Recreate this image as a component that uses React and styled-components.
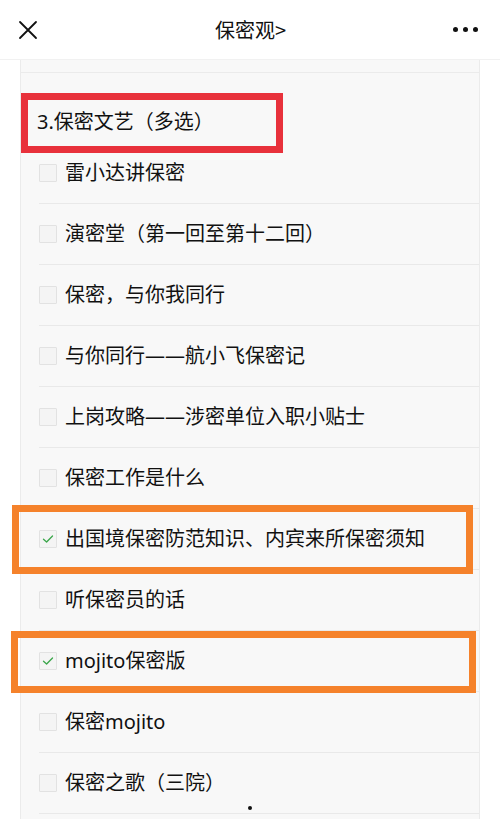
import React from "react";
import styled, { createGlobalStyle } from "styled-components";

const Global = createGlobalStyle`
  html, body { margin: 0; padding: 0; background: #ffffff; }
  body {
    font-family: "Noto Sans", "Noto Sans CJK SC", sans-serif;
    color: #111;
  }
  * { box-sizing: border-box; }
`;

const Page = styled.div`
  width: 500px;
  height: 819px;
  overflow: hidden;
  background: #ffffff;
`;

const Header = styled.header`
  height: 60px;
  display: flex;
  align-items: center;
  justify-content: space-between;
  padding: 0 22px 0 16px;
  background: #ffffff;
  border-bottom: 1px solid #f1f1f1;
`;

const HeaderTitle = styled.div`
  font-family: "Noto Sans CJK SC", sans-serif;
  font-size: 20px;
  color: #111;
  margin-left: 8px;
`;

const IconButton = styled.div`
  width: 24px;
  height: 24px;
  display: flex;
  align-items: center;
  justify-content: center;
`;

const Dots = styled.div`
  display: flex;
  gap: 5px;
  align-items: center;
`;

const Dot = styled.span`
  width: 5px;
  height: 5px;
  border-radius: 50%;
  background: #111;
`;

const Card = styled.div`
  margin-left: 20px;
  width: 460px;
  background: #f8f8f8;
  border-left: 1px solid #ebebeb;
  border-right: 1px solid #ebebeb;
  min-height: 760px;
`;

const PrevStub = styled.div`
  height: 13px;
  border-bottom: 1px solid #ebebeb;
`;

const Question = styled.section`
  padding-top: 35px;
`;

const TitleWrap = styled.div`
  position: relative;
  padding-left: 16px;
  margin-bottom: 7px;
`;

const Title = styled.h3`
  margin: 0;
  font-family: "Noto Sans", "Noto Sans CJK SC", sans-serif;
  font-weight: 400;
  font-size: 20px;
  line-height: 28px;
  color: #111;
`;

const Mark = styled.div`
  position: absolute;
  left: ${(p) => p.$left}px;
  top: ${(p) => p.$top}px;
  width: ${(p) => p.$w}px;
  height: ${(p) => p.$h}px;
  border: 7px solid ${(p) => p.$color};
  pointer-events: none;
`;

const List = styled.ul`
  list-style: none;
  margin: 0;
  padding: 0;
`;

const Row = styled.li`
  position: relative;
  margin-left: 18px;
  height: 61px;
  display: flex;
  align-items: center;
  gap: 8px;
  border-bottom: 1px solid #e9e9e9;
`;

const Box = styled.span`
  width: 18px;
  height: 18px;
  flex: none;
  border: 1px solid #e2e2e2;
  background: #f4f4f4;
  border-radius: 1px;
  display: flex;
  align-items: center;
  justify-content: center;
`;

const Label = styled.span`
  font-size: 20px;
  line-height: 28px;
  color: #111;
  white-space: nowrap;
`;

const Cursor = styled.span`
  position: absolute;
  left: 209px;
  bottom: 3px;
  width: 4px;
  height: 4px;
  border-radius: 50%;
  background: #111;
`;

const items = [
  { text: "雷小达讲保密" },
  { text: "演密堂（第一回至第十二回）" },
  { text: "保密，与你我同行" },
  { text: "与你同行——航小飞保密记" },
  { text: "上岗攻略——涉密单位入职小贴士" },
  { text: "保密工作是什么" },
  { text: "出国境保密防范知识、内宾来所保密须知", checked: true, mark: { left: -27, top: -4, w: 461, h: 69 } },
  { text: "听保密员的话" },
  { text: "mojito保密版", checked: true, mark: { left: -28, top: 0, w: 465, h: 62 } },
  { text: "保密mojito" },
  { text: "保密之歌（三院）", cursor: true },
];

function Check() {
  return (
    <svg width="12" height="10" viewBox="0 0 12 10">
      <path d="M1.5 5.2 L4.6 8 L10.5 2" fill="none" stroke="#3aa64a" strokeWidth="1.3" strokeLinecap="round" strokeLinejoin="round" />
    </svg>
  );
}

export default function App() {
  return (
    <Page>
      <Global />
      <Header>
        <IconButton>
          <svg width="20" height="20" viewBox="0 0 20 20">
            <path d="M2 2 L18 18 M18 2 L2 18" stroke="#111" strokeWidth="1.8" strokeLinecap="round" />
          </svg>
        </IconButton>
        <HeaderTitle>保密观&gt;</HeaderTitle>
        <Dots>
          <Dot />
          <Dot />
          <Dot />
        </Dots>
      </Header>
      <Card>
        <PrevStub />
        <Question>
          <TitleWrap>
            <Title>3.保密文艺（多选）</Title>
            <Mark $left={0} $top={-15} $w={262} $h={60} $color="#e8313b" />
          </TitleWrap>
          <List>
            {items.map((it, i) => (
              <Row key={i}>
                <Box>{it.checked && <Check />}</Box>
                <Label>{it.text}</Label>
                {it.mark && (
                  <Mark $left={it.mark.left} $top={it.mark.top} $w={it.mark.w} $h={it.mark.h} $color="#f5822b" />
                )}
                {it.cursor && <Cursor />}
              </Row>
            ))}
          </List>
        </Question>
      </Card>
    </Page>
  );
}
